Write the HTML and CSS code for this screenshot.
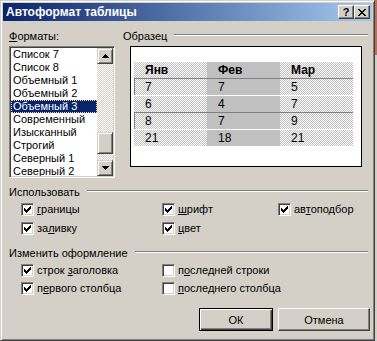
FILE: index.html
```html
<!DOCTYPE html>
<html lang="ru">
<head>
<meta charset="utf-8">
<title>Автоформат таблицы</title>
<link rel="stylesheet" href="styles.css">
</head>
<body>
<div class="stage">
  <div class="dialog">
    <div class="titlebar">
      <span class="title">Автоформат таблицы</span>
      <div class="tbtns">
        <div class="tbtn q">?</div>
        <div class="tbtn"><svg width="8" height="7" viewBox="0 0 8 7" shape-rendering="crispEdges"><path d="M0 0h2v1H0zM6 0h2v1H6zM1 1h2v1H1zM5 1h2v1H5zM2 2h4v1H2zM3 3h2v1H3zM2 4h4v1H2zM1 5h2v1H1zM5 5h2v1H5zM0 6h2v1H0zM6 6h2v1H6z" fill="#000"/></svg></div>
      </div>
    </div>
    <div class="body">
      <div class="top">
        <div class="formats">
          <div class="lbl"><u>Ф</u>орматы:</div>
          <div class="listbox">
            <div class="items">
              <div class="item">Список 7</div>
              <div class="item">Список 8</div>
              <div class="item">Объемный 1</div>
              <div class="item">Объемный 2</div>
              <div class="item sel">Объемный 3</div>
              <div class="item">Современный</div>
              <div class="item">Изысканный</div>
              <div class="item">Строгий</div>
              <div class="item">Северный 1</div>
              <div class="item">Северный 2</div>
            </div>
            <div class="scroll">
              <div class="sbtn"><svg width="7" height="4" viewBox="0 0 7 4" shape-rendering="crispEdges"><path d="M3 0h1v1H3zM2 1h3v1H2zM1 2h5v1H1zM0 3h7v1H0z" fill="#000"/></svg></div>
              <div class="track"><div class="thumb"></div></div>
              <div class="sbtn"><svg width="7" height="4" viewBox="0 0 7 4" shape-rendering="crispEdges"><path d="M0 0h7v1H0zM1 1h5v1H1zM2 2h3v1H2zM3 3h1v1H3z" fill="#000"/></svg></div>
            </div>
          </div>
        </div>
        <div class="sample">
          <div class="ghead"><span>Образец</span><div class="etch"></div></div>
          <div class="preview">
            <div class="ptable">
              <div class="prow hdr"><div class="cell d">Янв</div><div class="cell g">Фев</div><div class="cell d">Мар</div></div>
              <div class="prow b"><div class="cell d">7</div><div class="cell g">7</div><div class="cell d">5</div></div>
              <div class="prow"><div class="cell d">6</div><div class="cell g">4</div><div class="cell d">7</div></div>
              <div class="prow b"><div class="cell d">8</div><div class="cell g">7</div><div class="cell d">9</div></div>
              <div class="prow"><div class="cell d">21</div><div class="cell g">18</div><div class="cell d">21</div></div>
            </div>
          </div>
        </div>
      </div>

      <div class="grp grp1">
        <div class="ghead"><span>Использовать</span><div class="etch"></div></div>
        <div class="checks three">
          <div class="chk"><span class="box"><svg width="7" height="7" viewBox="0 0 7 7" shape-rendering="crispEdges"><path d="M6 0h1v1H6zM5 1h2v1H5zM0 2h1v1H0zM4 2h3v1H4zM0 3h2v1H0zM3 3h3v1H3zM0 4h5v1H0zM1 5h3v1H1zM2 6h1v1H2z" fill="#000"/></svg></span><span><u>г</u>раницы</span></div>
          <div class="chk"><span class="box"><svg width="7" height="7" viewBox="0 0 7 7" shape-rendering="crispEdges"><path d="M6 0h1v1H6zM5 1h2v1H5zM0 2h1v1H0zM4 2h3v1H4zM0 3h2v1H0zM3 3h3v1H3zM0 4h5v1H0zM1 5h3v1H1zM2 6h1v1H2z" fill="#000"/></svg></span><span><u>ш</u>рифт</span></div>
          <div class="chk"><span class="box"><svg width="7" height="7" viewBox="0 0 7 7" shape-rendering="crispEdges"><path d="M6 0h1v1H6zM5 1h2v1H5zM0 2h1v1H0zM4 2h3v1H4zM0 3h2v1H0zM3 3h3v1H3zM0 4h5v1H0zM1 5h3v1H1zM2 6h1v1H2z" fill="#000"/></svg></span><span>ав<u>т</u>оподбор</span></div>
          <div class="chk"><span class="box"><svg width="7" height="7" viewBox="0 0 7 7" shape-rendering="crispEdges"><path d="M6 0h1v1H6zM5 1h2v1H5zM0 2h1v1H0zM4 2h3v1H4zM0 3h2v1H0zM3 3h3v1H3zM0 4h5v1H0zM1 5h3v1H1zM2 6h1v1H2z" fill="#000"/></svg></span><span>за<u>л</u>ивку</span></div>
          <div class="chk"><span class="box"><svg width="7" height="7" viewBox="0 0 7 7" shape-rendering="crispEdges"><path d="M6 0h1v1H6zM5 1h2v1H5zM0 2h1v1H0zM4 2h3v1H4zM0 3h2v1H0zM3 3h3v1H3zM0 4h5v1H0zM1 5h3v1H1zM2 6h1v1H2z" fill="#000"/></svg></span><span><u>ц</u>вет</span></div>
        </div>
      </div>

      <div class="grp grp2">
        <div class="ghead"><span>Изменить оформление</span><div class="etch"></div></div>
        <div class="checks two">
          <div class="chk"><span class="box"><svg width="7" height="7" viewBox="0 0 7 7" shape-rendering="crispEdges"><path d="M6 0h1v1H6zM5 1h2v1H5zM0 2h1v1H0zM4 2h3v1H4zM0 3h2v1H0zM3 3h3v1H3zM0 4h5v1H0zM1 5h3v1H1zM2 6h1v1H2z" fill="#000"/></svg></span><span>строк <u>з</u>аголовка</span></div>
          <div class="chk"><span class="box"></span><span>п<u>о</u>следней строки</span></div>
          <div class="chk"><span class="box"><svg width="7" height="7" viewBox="0 0 7 7" shape-rendering="crispEdges"><path d="M6 0h1v1H6zM5 1h2v1H5zM0 2h1v1H0zM4 2h3v1H4zM0 3h2v1H0zM3 3h3v1H3zM0 4h5v1H0zM1 5h3v1H1zM2 6h1v1H2z" fill="#000"/></svg></span><span>п<u>е</u>рвого столбца</span></div>
          <div class="chk"><span class="box"></span><span><u>п</u>оследнего столбца</span></div>
        </div>
      </div>

      <div class="btns">
        <div class="btn def">ОК</div>
        <div class="btn cancel">Отмена</div>
      </div>
    </div>
  </div>
  <div class="edge"></div>
</div>
</body>
</html>
```

FILE: styles.css
```css
body {
  margin: 0;
  background: #d4d0c8;
  font-family: "Liberation Sans", Arial, sans-serif;
  font-size: 11px;
  color: #000;
}

.stage {
  display: flex;
  width: 377px;
  height: 341px;
  overflow: hidden;
}

.dialog {
  width: 375px;
  height: 341px;
  flex: none;
  box-sizing: border-box;
  border: 1px solid;
  border-color: #d4d0c8 #404040 #404040 #d4d0c8;
  box-shadow: inset 1px 1px #fff, inset -1px -1px #808080;
  padding: 2px;
  display: flex;
  flex-direction: column;
  background: #d4d0c8;
}

.edge {
  flex: 1;
  background: linear-gradient(#b3705b 0 55px, #d4d0c8 55px);
}

/* title bar */
.titlebar {
  height: 18px;
  flex: none;
  display: flex;
  align-items: center;
  background: linear-gradient(to right, #0a246a, #a6caf0);
  color: #fff;
}

.title {
  font-weight: bold;
  font-size: 12px;
  line-height: 18px;
  padding-left: 3px;
  white-space: nowrap;
}

.tbtns {
  margin-left: auto;
  margin-right: 2px;
  display: flex;
}

.tbtn {
  width: 16px;
  height: 14px;
  box-sizing: border-box;
  border: 1px solid;
  border-color: #fff #404040 #404040 #fff;
  box-shadow: inset -1px -1px #808080;
  background: #d4d0c8;
  display: flex;
  align-items: center;
  justify-content: center;
  color: #000;
}

.tbtn.q {
  font-weight: bold;
  font-size: 11px;
  line-height: 12px;
}

/* body */
.body {
  flex: 1;
  display: flex;
  flex-direction: column;
  padding: 0 2px 0 6px;
}

.top {
  display: flex;
  gap: 8px;
  margin-top: 9px;
}

.formats {
  width: 106px;
  flex: none;
}

.lbl {
  height: 13px;
  line-height: 13px;
  white-space: nowrap;
}

.listbox {
  margin-top: 3px;
  width: 106px;
  height: 132px;
  box-sizing: border-box;
  border: 1px solid;
  border-color: #808080 #fff #fff #808080;
  box-shadow: inset 1px 1px #404040, inset -1px -1px #d4d0c8;
  padding: 1px;
  display: flex;
}

.items {
  flex: 1;
  background: #fff;
  overflow: hidden;
}

.item {
  height: 13px;
  line-height: 13px;
  padding-left: 2px;
  white-space: nowrap;
}

.item.sel {
  background: #0a246a;
  color: #fff;
  outline: 1px dotted #f5db95;
  outline-offset: -1px;
}

.scroll {
  width: 16px;
  flex: none;
  display: flex;
  flex-direction: column;
}

.sbtn,
.thumb {
  width: 16px;
  box-sizing: border-box;
  border: 1px solid;
  border-color: #d4d0c8 #404040 #404040 #d4d0c8;
  box-shadow: inset 1px 1px #fff, inset -1px -1px #808080;
  background: #d4d0c8;
}

.sbtn {
  height: 16px;
  flex: none;
  display: flex;
  align-items: center;
  justify-content: center;
}

.track {
  flex: 1;
  background: repeating-conic-gradient(#fff 0 25%, #d4d0c8 0 50%) 0 0 / 2px 2px;
}

.thumb {
  margin-top: 68px;
  height: 22px;
}

/* sample */
.sample {
  flex: 1;
}

.ghead {
  display: flex;
  align-items: flex-start;
  height: 13px;
  line-height: 13px;
  white-space: nowrap;
}

.etch {
  flex: 1;
  margin: 4px 2px 0 7px;
  border-top: 1px solid #808080;
  border-bottom: 1px solid #fff;
}

.preview {
  margin: 3px 0 0 7px;
  width: 232px;
  height: 121px;
  box-sizing: border-box;
  border: 1px solid #000;
  background: #fff;
  padding: 15px 0 0 3px;
}

.ptable {
  width: 219px;
}

.prow {
  display: flex;
}

.prow.b {
  border-top: 1px solid #808080;
  border-bottom: 1px solid #fff;
}

.cell {
  width: 73px;
  height: 16px;
  line-height: 16px;
  box-sizing: border-box;
  padding-left: 11px;
  font-size: 12px;
}

.prow.b .cell:first-child {
  border-left: 1px solid #808080;
  padding-left: 10px;
}

.hdr .cell {
  font-weight: bold;
}

.d {
  background: repeating-conic-gradient(#c0c0c0 0 25%, #fff 0 50%) 0 0 / 2px 2px;
}

.g {
  background: #c0c0c0;
}

/* groups */
.grp1 {
  margin-top: 8px;
}

.grp2 {
  margin-top: 12px;
}

.checks {
  display: grid;
  margin-top: 4px;
  padding-left: 12px;
}

.checks.three {
  grid-template-columns: 141px 116px auto;
  row-gap: 6px;
}

.checks.two {
  grid-template-columns: 141px auto;
  row-gap: 5px;
}

.chk {
  display: flex;
  align-items: center;
  gap: 3px;
  height: 13px;
  line-height: 13px;
  white-space: nowrap;
}

.box {
  width: 13px;
  height: 13px;
  flex: none;
  box-sizing: border-box;
  border: 1px solid;
  border-color: #808080 #fff #fff #808080;
  box-shadow: inset 1px 1px #404040, inset -1px -1px #d4d0c8;
  background: #fff;
  padding: 2px;
  display: flex;
}

/* buttons */
.btns {
  display: flex;
  justify-content: flex-end;
  gap: 5px;
  margin-top: 13px;
}

.btn {
  height: 23px;
  box-sizing: border-box;
  display: flex;
  align-items: center;
  justify-content: center;
}

.btn.def {
  width: 74px;
  border: 1px solid #000;
  box-shadow: inset 1px 1px #fff, inset -1px -1px #404040, inset -2px -2px #808080;
}

.btn.cancel {
  width: 92px;
  border: 1px solid;
  border-color: #fff #404040 #404040 #fff;
  box-shadow: inset -1px -1px #808080;
}
```
